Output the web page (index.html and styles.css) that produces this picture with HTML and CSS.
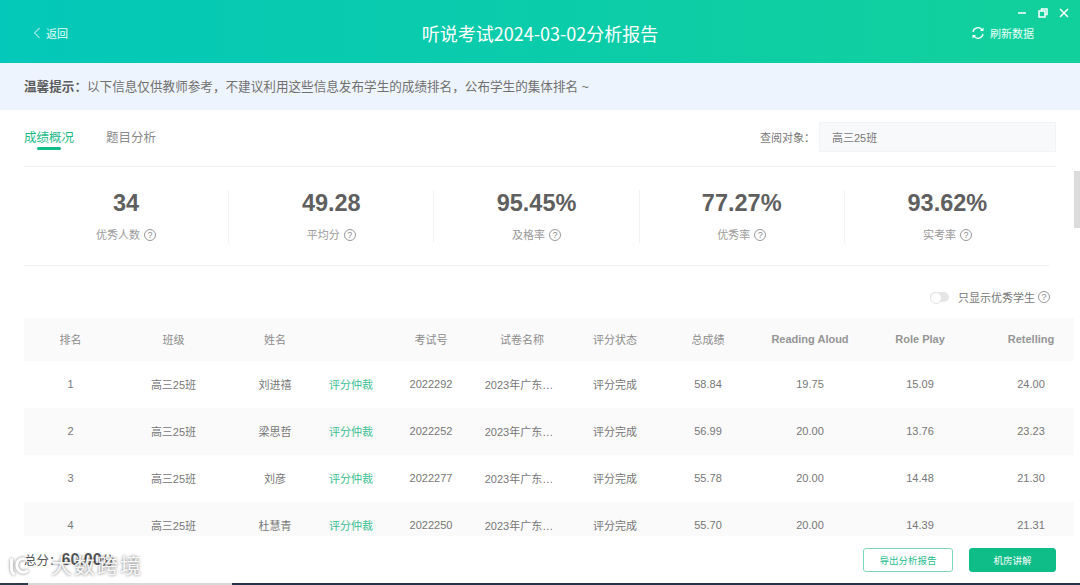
FILE: index.html
```html
<!DOCTYPE html>
<html lang="zh-CN">
<head>
<meta charset="utf-8">
<title>听说考试2024-03-02分析报告</title>
<link rel="stylesheet" href="styles.css">
</head>
<body>
<div class="app">
  <header class="top">
    <a class="back"><svg class="back-i" viewBox="0 0 8 12"><path d="M6.5 1 1.5 6l5 5"/></svg>返回</a>
    <h1 class="title">听说考试2024-03-02分析报告</h1>
    <div class="win">
      <svg viewBox="0 0 10 10"><path d="M1 5h8"/></svg>
      <svg viewBox="0 0 10 10"><path d="M3.500 2.500V1h5.500v5.500H7.500M1 3h6v6H1z"/></svg>
      <svg viewBox="0 0 10 10"><path d="M1 1l8 8M9 1 1 9"/></svg>
    </div>
    <a class="refresh"><svg viewBox="0 0 14 14"><path d="M2 6a5 5 0 0 1 9-2.200M12 8a5 5 0 0 1-9 2.200"/><path class="fill" d="M12.500 1.500v3.500H9zM1.500 12.500V9H5z"/></svg>刷新数据</a>
  </header>
  <div class="notice"><b>温馨提示：</b>以下信息仅供教师参考，不建议利用这些信息发布学生的成绩排名，公布学生的集体排名 ~</div>
  <main class="main">
    <div class="tabs">
      <span class="tab on">成绩概况</span>
      <span class="tab">题目分析</span>
      <span class="look">查阅对象：</span>
      <span class="pick">高三25班</span>
    </div>
    <section class="stats">
      <div class="stat"><strong>34</strong><span>优秀人数<i class="q">?</i></span></div>
      <div class="stat"><strong>49.28</strong><span>平均分<i class="q">?</i></span></div>
      <div class="stat"><strong>95.45%</strong><span>及格率<i class="q">?</i></span></div>
      <div class="stat"><strong>77.27%</strong><span>优秀率<i class="q">?</i></span></div>
      <div class="stat"><strong>93.62%</strong><span>实考率<i class="q">?</i></span></div>
    </section>
    <div class="filter"><span class="switch"></span>只显示优秀学生<i class="q">?</i></div>
    <table class="grid">
      <colgroup>
        <col class="c1"><col class="c2"><col class="c3"><col class="c4"><col class="c5"><col class="c6"><col class="c7"><col class="c8"><col class="c9"><col class="c10"><col class="c11">
      </colgroup>
      <thead>
        <tr><th>排名</th><th>班级</th><th>姓名</th><th></th><th>考试号</th><th>试卷名称</th><th>评分状态</th><th>总成绩</th><th>Reading Aloud</th><th>Role Play</th><th>Retelling</th></tr>
      </thead>
      <tbody>
        <tr><td>1</td><td>高三25班</td><td>刘进禧</td><td class="link">评分仲裁</td><td>2022292</td><td class="paper">2023年广东…</td><td>评分完成</td><td>58.84</td><td>19.75</td><td>15.09</td><td>24.00</td></tr>
        <tr><td>2</td><td>高三25班</td><td>梁思哲</td><td class="link">评分仲裁</td><td>2022252</td><td class="paper">2023年广东…</td><td>评分完成</td><td>56.99</td><td>20.00</td><td>13.76</td><td>23.23</td></tr>
        <tr><td>3</td><td>高三25班</td><td>刘彦</td><td class="link">评分仲裁</td><td>2022277</td><td class="paper">2023年广东…</td><td>评分完成</td><td>55.78</td><td>20.00</td><td>14.48</td><td>21.30</td></tr>
        <tr><td>4</td><td>高三25班</td><td>杜慧青</td><td class="link">评分仲裁</td><td>2022250</td><td class="paper">2023年广东…</td><td>评分完成</td><td>55.70</td><td>20.00</td><td>14.39</td><td>21.31</td></tr>
      </tbody>
    </table>
    <div class="thumb"></div>
  </main>
  <footer class="foot">
    <div class="total">总分：<b>60.00</b>分</div>
    <button class="btn ghost">导出分析报告</button>
    <button class="btn solid">机房讲解</button>
  </footer>
  <div class="edge"><span class="e1"></span><span class="e2"></span><span class="e3"></span></div>
  <div class="mark"><svg viewBox="0 0 24 24"><path d="M3 3v13c0 3 1.500 5 4 6M22 5c-4-3-10-2-12 2.500-2 5.500 1.500 12 7 12 2.500 0 4-.800 5.500-2.500"/></svg>大数跨境</div>
</div>
</body>
</html>
```

FILE: styles.css
```css
* { box-sizing: border-box; }
html, body { margin: 0; height: 100%; overflow: hidden; }
body { font-family: "Liberation Sans", "Noto Sans CJK SC", sans-serif; color: #666; background: #fff; }
.app { position: relative; width: 1080px; height: 585px; display: flex; flex-direction: column; overflow: hidden; }

.top { position: relative; height: 63px; flex: none; display: flex; align-items: center; justify-content: space-between; padding: 3px 46px 0 33px; color: #fff; background: linear-gradient(90deg, #04c8b9 0%, #12d09b 100%); }
.back, .refresh { display: flex; align-items: center; font-size: 11px; color: #eafff9; }
.back-i { width: 8px; height: 12px; margin-right: 5px; fill: none; stroke: #eafff9; stroke-width: 1; }
.title { position: absolute; left: 0; right: 0; top: 21px; margin: 0; text-align: center; font: 400 18px/24px "Noto Sans CJK SC", sans-serif; }
.win { position: absolute; right: 11px; top: 8px; display: flex; gap: 11px; }
.win svg { width: 10px; height: 10px; fill: none; stroke: #fff; stroke-width: 1.500; }
.refresh svg { width: 14px; height: 14px; margin-right: 5px; fill: none; stroke: #fff; stroke-width: 1.300; }
.refresh .fill { fill: #fff; stroke: none; }

.notice { height: 47px; flex: none; padding: 0 0 2px 24px; display: flex; align-items: center; font-size: 12.600px; color: #707070; background: #eef4fd; }
.notice b { color: #5c5c5c; }

.main { position: relative; flex: 1; min-height: 0; overflow: hidden; padding-left: 24px; }
.tabs { height: 57px; width: 1032px; padding-bottom: 3px; display: flex; align-items: center; border-bottom: 1px solid #f1f1f1; font-size: 12.500px; }
.tab { position: relative; margin-right: 32px; color: #8a8a8a; }
.tab.on { color: #1dbb8a; }
.tab.on::after { content: ""; position: absolute; left: 13px; right: 13px; bottom: -4px; height: 3px; border-radius: 2px; background: #12bc8a; }
.look { margin-left: auto; font-size: 11px; color: #777; }
.pick { width: 237px; height: 30px; margin-left: 4px; padding-left: 12px; display: flex; align-items: center; font-size: 11px; color: #777; background: #f8f9fb; border: 1px solid #f2f3f5; }

.stats { width: 1026px; height: 99px; display: grid; grid-template-columns: repeat(5, 1fr); align-items: center; border-bottom: 1px solid #f3f3f3; }
.stat { height: 53px; display: flex; flex-direction: column; align-items: center; justify-content: space-between; border-right: 1px solid #f2f2f2; }
.stat:last-child { border-right: 0; }
.stat strong { font-size: 23.500px; line-height: 26px; color: #5f5f5f; }
.stat span { display: flex; align-items: center; font-size: 11px; line-height: 15px; color: #9a9a9a; }
.q { width: 12px; height: 12px; margin-left: 4px; display: inline-flex; align-items: center; justify-content: center; border: 1px solid #999; border-radius: 50%; font-size: 9px; font-style: normal; color: #888; }

.filter { width: 1026px; height: 52px; padding-top: 10px; display: flex; align-items: center; justify-content: flex-end; font-size: 11px; color: #777; }
.filter .q { margin-left: 3px; }
.switch { width: 19px; height: 10px; margin-right: 9px; position: relative; border-radius: 5px; background: #e6e6e6; }
.switch::before { content: ""; position: absolute; left: 0; top: 0; width: 10px; height: 10px; border-radius: 50%; background: #fff; border: 1px solid #e4e4e4; }

.grid { width: 1050px; table-layout: fixed; border-collapse: collapse; font-size: 11px; }
.c1 { width: 93px; } .c2 { width: 113px; } .c3 { width: 90px; } .c4 { width: 63px; } .c5 { width: 96px; } .c6 { width: 86px; }
.c7 { width: 100px; } .c8 { width: 86px; } .c9 { width: 118px; } .c10 { width: 102px; } .c11 { width: 103px; }
.grid th { height: 43px; padding: 0 0 1px; font-weight: 400; color: #8c8c8c; background: #fafafa; }
.grid th:nth-child(n+9) { font-weight: 700; color: #959595; }
.grid td { height: 47px; padding: 0 0 2px; text-align: center; color: #777; white-space: nowrap; }
.grid td.paper { padding-right: 6px; }
.grid td.link { padding-right: 1px; color: #3cbf92; }
.grid th:last-child, .grid td:last-child { padding-left: 17px; }
.grid tbody tr:nth-child(even) td { background: #fafafa; }
.thumb { position: absolute; right: 0; top: 61px; width: 6px; height: 57px; background: #dcdcdc; }

.foot { height: 47px; flex: none; padding: 0 24px; display: flex; align-items: center; gap: 16px; background: #fff; }
.total { margin-right: auto; font-size: 12.500px; color: #555; }
.total b { font-size: 16px; color: #555; }
.btn { height: 24px; border-radius: 3px; font: 9.500px "Liberation Sans", "Noto Sans CJK SC", sans-serif; padding: 0; }
.ghost { width: 90px; color: #28bd90; background: #fff; border: 1px solid #7ed8bf; }
.solid { width: 87px; color: #fff; background: #0fbd88; border: 1px solid #0fbd88; }

.edge { height: 2px; flex: none; display: flex; }
.e1 { width: 28px; background: #2c3a4a; }
.e2 { width: 204px; background: #d8d8d8; }
.e3 { flex: 1; background: #26324a; }

.mark { position: absolute; left: 9px; top: 553px; display: flex; align-items: center; gap: 22px; font-size: 21px; line-height: 26px; letter-spacing: 2px; color: rgba(255,255,255,.92); text-shadow: 0 0 3px rgba(0,0,0,.6); }
.mark svg { width: 20px; height: 20px; fill: none; stroke: #fff; stroke-width: 3.500; filter: drop-shadow(0 0 1.500px rgba(0,0,0,.5)); }
```
